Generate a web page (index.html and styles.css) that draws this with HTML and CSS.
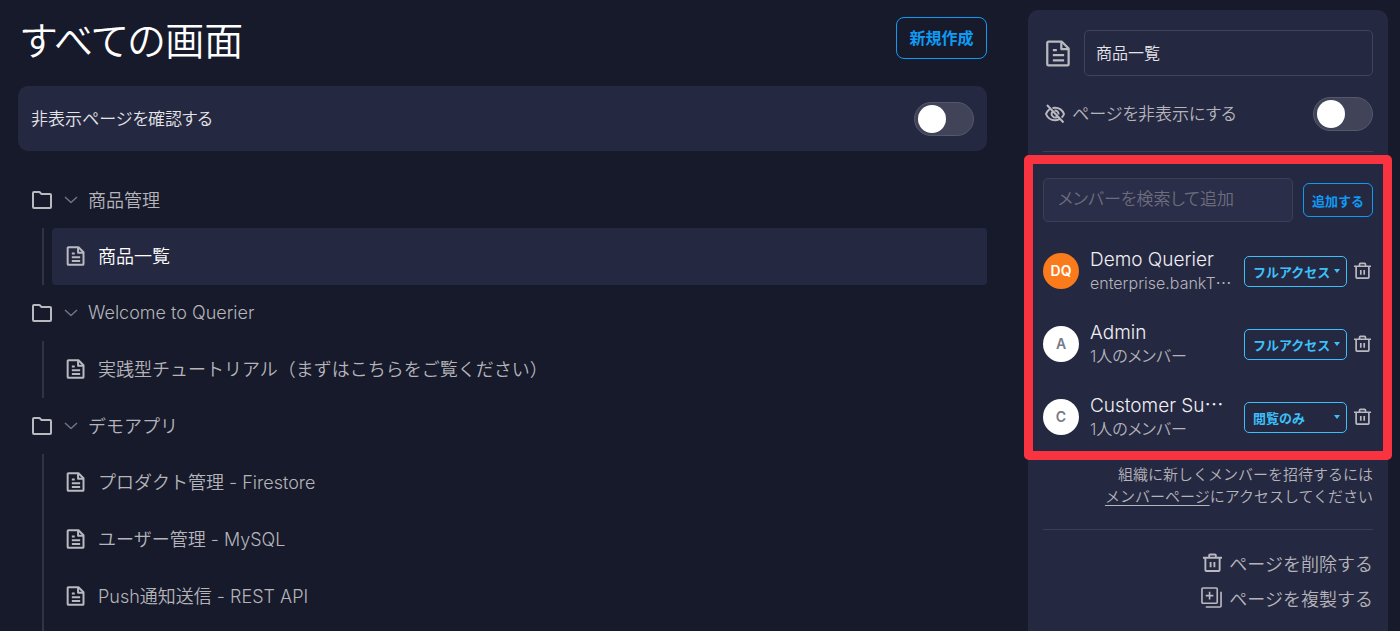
FILE: index.html
```html
<!DOCTYPE html>
<html lang="ja">
<head>
    <meta charset="UTF-8">
    <meta name="viewport" content="width=device-width, initial-scale=1">
    <title>すべての画面</title>
    <link rel="stylesheet" href="styles.css">
</head>
<body>
    <!-- アイコン -->
    <svg class="sprite" aria-hidden="true">
        <symbol id="i-file" viewBox="0 0 24 24">
            <path d="M3 1.500h12l6 6V21.500a1 1 0 0 1-1 1H3a1 1 0 0 1-1-1V2.500a1 1 0 0 1 1-1z"/>
            <path d="M14.500 2V8h6M7 9h3.500M7 13.500h10M7 18h10"/>
        </symbol>
        <symbol id="i-folder" viewBox="0 0 20 20">
            <path d="M2 2h5.500l2 2H18a1 1 0 0 1 1 1V17a1 1 0 0 1-1 1H2a1 1 0 0 1-1-1V3a1 1 0 0 1 1-1z"/>
        </symbol>
        <symbol id="i-down" viewBox="0 0 14 8">
            <path d="M1 1l6 5.500 6-5.500"/>
        </symbol>
        <symbol id="i-trash" viewBox="0 0 20 20">
            <path d="M0 5h20M6.500 5V2.500a1 1 0 0 1 1-1h5a1 1 0 0 1 1 1V5M2.500 5v13a1 1 0 0 0 1 1h13a1 1 0 0 0 1-1V5M8 9.500v5.500M12 9.500v5.500"/>
        </symbol>
        <symbol id="i-hide" viewBox="0 0 20 20">
            <path d="M4.500 5.200C3 6.400 1.700 8 1 10c1.500 3.800 5 6.300 9 6.300 1.600 0 3-.4 4.300-1.100M7.500 4c.8-.2 1.600-.3 2.500-.3 4 0 7.500 2.500 9 6.300-.5 1.400-1.300 2.600-2.300 3.600M7.200 8A3.600 3.600 0 0 0 12 13M9.500 6.500a3.600 3.600 0 0 1 4 4M2 1l16.500 17.500"/>
        </symbol>
        <symbol id="i-copy" viewBox="0 0 22 22">
            <path d="M2 1h14a1 1 0 0 1 1 1v14a1 1 0 0 1-1 1H2a1 1 0 0 1-1-1V2a1 1 0 0 1 1-1zM9 5v8M5 9h8M21 5v15a1 1 0 0 1-1 1H5"/>
        </symbol>
    </svg>

    <div id="wrap">
        <main class="main">
            <div class="head">
                <h1>すべての画面</h1>
                <button type="button" class="btn">新規作成</button>
            </div>
            <div class="filter">
                <label for="showHidden">非表示ページを確認する</label>
                <input type="checkbox" class="toggle" id="showHidden">
            </div>
            <ul class="tree">
                <li>
                    <div class="folder">
                        <svg class="ico-folder"><use href="#i-folder"/></svg>
                        <svg class="ico-down"><use href="#i-down"/></svg>
                        <span>商品管理</span>
                    </div>
                    <ul class="pages">
                        <li class="page active"><svg class="ico-page"><use href="#i-file"/></svg><span>商品一覧</span></li>
                    </ul>
                </li>
                <li>
                    <div class="folder">
                        <svg class="ico-folder"><use href="#i-folder"/></svg>
                        <svg class="ico-down"><use href="#i-down"/></svg>
                        <span>Welcome to Querier</span>
                    </div>
                    <ul class="pages">
                        <li class="page"><svg class="ico-page"><use href="#i-file"/></svg><span>実践型チュートリアル（まずはこちらをご覧ください）</span></li>
                    </ul>
                </li>
                <li>
                    <div class="folder">
                        <svg class="ico-folder"><use href="#i-folder"/></svg>
                        <svg class="ico-down"><use href="#i-down"/></svg>
                        <span>デモアプリ</span>
                    </div>
                    <ul class="pages">
                        <li class="page"><svg class="ico-page"><use href="#i-file"/></svg><span>プロダクト管理 - Firestore</span></li>
                        <li class="page"><svg class="ico-page"><use href="#i-file"/></svg><span>ユーザー管理 - MySQL</span></li>
                        <li class="page"><svg class="ico-page"><use href="#i-file"/></svg><span>Push通知送信 - REST API</span></li>
                    </ul>
                </li>
            </ul>
        </main>

        <aside class="panel">
            <div class="name">
                <svg class="ico-name"><use href="#i-file"/></svg>
                <input type="text" value="商品一覧" aria-label="ページ名">
            </div>
            <div class="hide">
                <svg class="ico-hide"><use href="#i-hide"/></svg>
                <label for="hidePage">ページを非表示にする</label>
                <input type="checkbox" class="toggle" id="hidePage">
            </div>
            <section class="members">
                <div class="search">
                    <input type="text" placeholder="メンバーを検索して追加" aria-label="メンバーを検索して追加">
                    <button type="button" class="btn small">追加する</button>
                </div>
                <ul>
                    <li class="member">
                        <span class="avatar orange">DQ</span>
                        <div class="info">
                            <p>Demo Querier</p>
                            <small>enterprise.bankT⋯</small>
                        </div>
                        <div class="role">
                            <select aria-label="Demo Querier">
                                <option selected>フルアクセス</option>
                                <option>閲覧のみ</option>
                            </select>
                        </div>
                        <button type="button" class="del" aria-label="削除"><svg class="ico-del"><use href="#i-trash"/></svg></button>
                    </li>
                    <li class="member">
                        <span class="avatar">A</span>
                        <div class="info">
                            <p>Admin</p>
                            <small>1人のメンバー</small>
                        </div>
                        <div class="role">
                            <select aria-label="Admin">
                                <option selected>フルアクセス</option>
                                <option>閲覧のみ</option>
                            </select>
                        </div>
                        <button type="button" class="del" aria-label="削除"><svg class="ico-del"><use href="#i-trash"/></svg></button>
                    </li>
                    <li class="member">
                        <span class="avatar">C</span>
                        <div class="info">
                            <p>Customer Su⋯</p>
                            <small>1人のメンバー</small>
                        </div>
                        <div class="role">
                            <select aria-label="Customer Su">
                                <option>フルアクセス</option>
                                <option selected>閲覧のみ</option>
                            </select>
                        </div>
                        <button type="button" class="del" aria-label="削除"><svg class="ico-del"><use href="#i-trash"/></svg></button>
                    </li>
                </ul>
            </section>
            <p class="help">組織に新しくメンバーを招待するには<br><a href="#">メンバーページ</a>にアクセスしてください</p>
            <div class="actions">
                <button type="button"><svg class="ico-act"><use href="#i-trash"/></svg>ページを削除する</button>
                <button type="button"><svg class="ico-copy"><use href="#i-copy"/></svg>ページを複製する</button>
            </div>
        </aside>
    </div>
</body>
</html>
```
FILE: styles.css
```css
*{box-sizing: border-box;}
body,p,h1{margin: 0;}
ul,li{margin: 0;padding: 0;list-style: none;}
body{
    overflow: hidden;
    background: #171a2a;
    color: #b4b4ba;
    font-family: "Inter","Noto Sans CJK JP",sans-serif;
    font-size: 18px;
    font-weight: 350;
}
input,select,button{
    font-family: inherit;
    margin: 0;
}
svg{
    flex: none;
    fill: none;
    stroke: #b9b9c0;
    stroke-width: 2;
    stroke-linejoin: round;
}
.sprite{
    position: absolute;
    width: 0;
    height: 0;
}

#wrap{
    display: flex;
    gap: 41px;
    height: 100vh;
    padding: 10px 12px 0 18px;
}

/* 左側 */
.main{
    flex: 1;
    display: flex;
    flex-direction: column;
    min-width: 0;
}
.head{
    display: flex;
    justify-content: space-between;
    align-items: flex-start;
    height: 76px;
    padding-top: 7px;
}
.head h1{
    padding-left: 3px;
    font-size: 39px;
    line-height: 48px;
    font-weight: 350;
    color: #fff;
    font-feature-settings: "palt";
}
.btn{
    width: 91px;
    height: 42px;
    padding: 0 0 3px;
    border: 1px solid #0f9bf5;
    border-radius: 8px;
    background: none;
    color: #0f9bf5;
    font-size: 16px;
    font-weight: 700;
    cursor: pointer;
}
.btn.small{
    flex: none;
    width: 70px;
    height: 34px;
    padding: 0;
    border-radius: 6px;
    font-size: 13px;
}
.filter{
    display: flex;
    flex: none;
    justify-content: space-between;
    align-items: center;
    height: 65px;
    padding: 0 13px;
    border-radius: 10px;
    background: #252841;
    color: #e4e4e8;
    font-size: 17px;
}
.filter label,.hide label{
    padding-bottom: 2px;
    font-feature-settings: "palt";
}

.toggle{
    appearance: none;
    flex: none;
    display: flex;
    align-items: center;
    width: 60px;
    height: 34px;
    padding-left: 3px;
    border: 1px solid #55586b;
    border-radius: 17px;
    background: #414458;
    cursor: pointer;
}
.toggle::before{
    content: "";
    width: 28px;
    height: 28px;
    border-radius: 50%;
    background: #fff;
}
.toggle:checked{
    justify-content: flex-end;
    padding: 0 3px 0 0;
    background: #0f9bf5;
}

.tree{
    flex: 1;
    display: flex;
    flex-direction: column;
    padding-top: 21px;
}
.tree > li:last-child{
    flex: 1;
    display: flex;
    flex-direction: column;
}
.tree > li:last-child .pages{flex: 1;}
.folder{
    display: flex;
    align-items: center;
    height: 56px;
    padding-left: 14px;
}
.folder span{padding: 0 0 2px 10px;}
.pages{
    margin-left: 24px;
    padding-left: 8px;
    border-left: 2px solid #303245;
}
.page{
    display: flex;
    align-items: center;
    gap: 12px;
    height: 57px;
    padding: 0 0 1px 14px;
    border-radius: 4px;
}
.page span{padding-bottom: 2px;}
.page.active{
    background: #252841;
    color: #fff;
}
.ico-folder{
    width: 20px;
    height: 20px;
    margin-right: 12px;
}
.ico-down{
    width: 14px;
    height: 8px;
    stroke: #73747f;
    stroke-width: 1.5;
}
.ico-page{
    width: 20px;
    height: 20px;
    stroke-width: 2.4;
}

/* 右側 */
.panel{
    flex: none;
    width: 360px;
    padding: 20px 15px 0;
    border-radius: 10px 10px 0 0;
    background: #252841;
}
.name{
    display: flex;
    justify-content: space-between;
    align-items: center;
}
.ico-name{
    width: 27px;
    height: 27px;
    margin-left: 2px;
}
.name input{
    width: 289px;
    height: 46px;
    padding: 0 11px 2px;
    border: 1px solid #404359;
    border-radius: 5px;
    background: none;
    color: #e4e4e8;
    font-size: 16px;
    font-weight: 350;
}
.hide{
    display: flex;
    align-items: center;
    height: 75px;
    font-size: 17px;
}
.ico-hide{
    width: 20px;
    height: 20px;
    margin: 0 7px 0 2px;
}
.hide label{flex: 1;}
.members{
    position: relative;
    padding: 26px 0 7px;
    border-top: 1px solid #3c3e53;
}
/* 強調枠 */
.members::after{
    content: "";
    position: absolute;
    top: 3px;
    left: -19px;
    right: -19px;
    bottom: 0;
    border: 9px solid #fa3341;
    border-radius: 5px;
    pointer-events: none;
}
.search{
    display: flex;
    align-items: center;
    gap: 10px;
    margin-bottom: 12px;
}
.search input{
    flex: 1;
    min-width: 0;
    height: 44px;
    padding: 0 14px 2px;
    border: 1px solid #3d4055;
    border-radius: 5px;
    background: #2b2e48;
    color: #e4e4e8;
    font-size: 17px;
    font-weight: 350;
    font-feature-settings: "palt";
}
.search input::placeholder{color: #6b6d7e;}
.member{
    display: flex;
    align-items: center;
    height: 73px;
}
.avatar{
    display: flex;
    flex: none;
    justify-content: center;
    align-items: center;
    width: 36px;
    height: 36px;
    border-radius: 50%;
    background: #fff;
    color: #777987;
    font-size: 14px;
    font-weight: 600;
}
.avatar.orange{
    background: #f97b1c;
    color: #fff;
}
.info{
    flex: 1;
    min-width: 0;
    padding-left: 11px;
    white-space: nowrap;
}
.info p{
    color: #f0f0f3;
    font-size: 19px;
    line-height: 24px;
}
.info small{
    display: block;
    font-size: 16px;
    line-height: 22px;
    font-feature-settings: "palt";
}
.role{
    position: relative;
    padding-top: 2px;
}
.role select{
    appearance: none;
    display: block;
    width: 103px;
    height: 31px;
    padding: 0 8px;
    border: 1px solid #3cc0fa;
    border-radius: 5px;
    background: none;
    color: #3cc0fa;
    font-size: 13px;
    font-weight: 700;
}
.role::after{
    content: "";
    position: absolute;
    top: 15px;
    right: 7px;
    border: 3px solid transparent;
    border-top: 4px solid #3cc0fa;
    border-bottom: none;
    pointer-events: none;
}
.del{
    display: flex;
    padding: 0 2px 0 7px;
    border: none;
    background: none;
    cursor: pointer;
}
.ico-del{
    width: 17px;
    height: 17px;
}
.help{
    padding: 4px 0 21px;
    border-bottom: 1px solid #3c3e53;
    text-align: right;
    font-size: 15px;
    line-height: 22px;
}
.help a{
    color: inherit;
    text-underline-offset: 3px;
}
.actions{
    display: flex;
    flex-direction: column;
    align-items: flex-end;
    padding-top: 15px;
}
.actions button{
    display: flex;
    align-items: center;
    gap: 7px;
    height: 35px;
    padding: 0;
    border: none;
    background: none;
    color: inherit;
    font-size: 18px;
    font-weight: 350;
    cursor: pointer;
}
.ico-act{
    width: 19px;
    height: 19px;
}
.ico-copy{
    width: 21px;
    height: 21px;
    stroke-width: 1.7;
}
```
